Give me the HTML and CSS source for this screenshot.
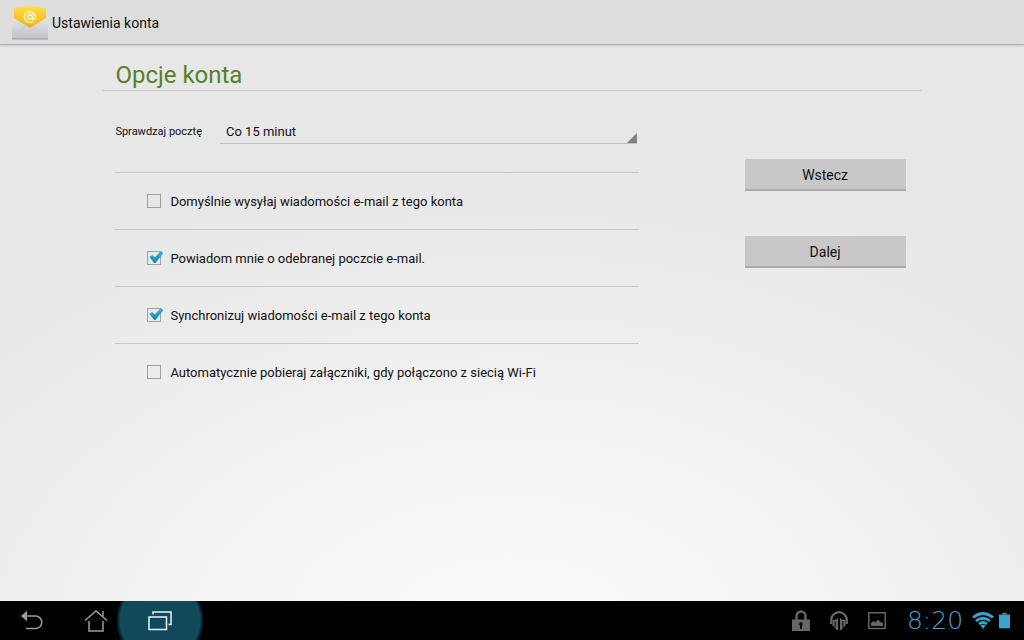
FILE: index.html
```html
<!DOCTYPE html>
<html lang="pl">
<head>
<meta charset="utf-8">
<title>Ustawienia konta</title>
<link rel="stylesheet" href="styles.css">
</head>
<body>
<header class="action-bar">
  <svg class="app-icon" viewBox="0 0 36 34" aria-hidden="true">
    <defs>
      <linearGradient id="paper" x1="0" y1="0" x2="0" y2="1"><stop offset="0" stop-color="#e6e6ea"/><stop offset="1" stop-color="#c0c0ca"/></linearGradient>
      <linearGradient id="flap" x1="0" y1="0" x2="0" y2="1"><stop offset="0" stop-color="#ffe04a"/><stop offset="1" stop-color="#f4ad0c"/></linearGradient>
    </defs>
    <path d="M0 12 3 3h30l3 9v20H0z" fill="url(#paper)"/>
    <path d="M2 2 18 0 34 2v11L18 23 2 13z" fill="url(#flap)"/>
    <path d="M0 11 18 22 36 11v22H0z" fill="url(#paper)"/>
    <path d="M1 32 14 20M35 32 22 20" stroke="#c8c8d2" fill="none"/>
    <path d="M0 33h36" stroke="#9999a4" fill="none"/>
    <circle cx="18" cy="11" r="2.300" fill="none" stroke="#fff8dc" stroke-width="1.400"/>
    <path d="M20.500 8.500v4q.3 1.300 1.600 1 1.600-.6 1.500-3a5.600 5.300 0 1 0-2.600 5.100" fill="none" stroke="#fff8dc" stroke-width="1.400"/>
  </svg>
  <h1 class="app-title">Ustawienia konta</h1>
</header>

<main class="content">
  <form class="sheet">
    <h2 class="heading">Opcje konta</h2>
    <div class="columns">
      <div class="options">
        <div class="frequency">
          <label class="frequency-label" for="freq">Sprawdzaj pocztę</label>
          <div class="spinner">
            <select class="spinner-select" id="freq"><option>Co 15 minut</option></select>
          </div>
        </div>
        <label class="option"><input class="check" type="checkbox"><span>Domyślnie wysyłaj wiadomości e-mail z tego konta</span></label>
        <label class="option"><input class="check" type="checkbox" checked><span>Powiadom mnie o odebranej poczcie e-mail.</span></label>
        <label class="option"><input class="check" type="checkbox" checked><span>Synchronizuj wiadomości e-mail z tego konta</span></label>
        <label class="option"><input class="check" type="checkbox"><span>Automatycznie pobieraj załączniki, gdy połączono z siecią Wi-Fi</span></label>
      </div>
      <div class="actions">
        <button class="button" type="button">Wstecz</button>
        <button class="button" type="button">Dalej</button>
      </div>
    </div>
  </form>
</main>

<nav class="system-bar">
  <button class="nav-button" type="button" aria-label="Wstecz">
    <svg width="24" height="22" viewBox="0 0 24 22"><path d="M5 6h10.500a6.300 6.300 0 0 1 0 12.600H6" fill="none" stroke="#9a9a9a" stroke-width="1.500"/><path d="M1 6 7 .8v10.400z" fill="#9a9a9a"/></svg>
  </button>
  <button class="nav-button" type="button" aria-label="Ekran główny">
    <svg width="24" height="22" viewBox="0 0 24 22" fill="none" stroke="#9a9a9a" stroke-width="1.500"><path d="M1 10.500 12 1l11 9.500M5 11v10h14V11M19 6.500V1"/></svg>
  </button>
  <button class="nav-button nav-button-active" type="button" aria-label="Ostatnie aplikacje">
    <svg width="24" height="20" viewBox="0 0 24 20" fill="none" stroke="#e4f6fb" stroke-width="1.500"><path d="M1 6h17.500v12.500H1z"/><path d="M5 3.500V1h18v12.500h-2.500"/></svg>
  </button>
  <div class="status">
    <div class="notifications">
      <svg width="18" height="22" viewBox="0 0 18 22" aria-hidden="true"><path d="M4.500 11V6a4.500 4.500 0 0 1 9 0v5" fill="none" stroke="#666" stroke-width="2.400"/><path d="M0 9.500h18V21H0z" fill="#666"/><path d="M9 12a2 2 0 0 1 1 3.600V19H8v-3.400A2 2 0 0 1 9 12" fill="#0a0a0a"/></svg>
      <svg width="18" height="20" viewBox="0 0 18 20" aria-hidden="true"><path d="M1.200 13V9a7.800 7.800 0 0 1 15.600 0v4" fill="none" stroke="#666" stroke-width="2.200"/><path d="M8 7v12H6.500Q5.500 16 2.500 14.500V9Q6 9.500 8 7m2 0v12h1.500q1-3 4-4.500V9Q12 9.500 10 7" fill="#666"/><path d="M5.200 10v6M12.800 10v6" stroke="#111"/></svg>
      <svg width="18" height="18" viewBox="0 0 18 18" aria-hidden="true"><path d="M.8.800h16.400v15.700H.8z" fill="none" stroke="#666" stroke-width="1.500"/><path d="M3 14v-3l2.500-2 2 1.500L10 7.500l2.500 2.500 2.500 1v3z" fill="#666"/></svg>
    </div>
    <time class="clock">8:20</time>
    <svg width="22" height="18" viewBox="0 0 22 18" fill="none" stroke="#37a6cf" aria-hidden="true"><path d="M1 5.500q10-8 20 0M4 9q7-5.500 14 0M7 12q4-3 8 0" stroke-width="2.800"/><path d="M8.500 13.500q2.500-1.600 5 0L11 17z" fill="#37a6cf" stroke="none"/></svg>
    <svg width="11" height="17" viewBox="0 0 12 17" aria-hidden="true"><path d="M3.500 0h5v2h-5z" fill="#777"/><path d="M0 2h12v15H0z" fill="#37a6cf"/></svg>
  </div>
</nav>
</body>
</html>
```
FILE: styles.css
```css
* {
  box-sizing: border-box;
}

body {
  margin: 0;
  min-height: 100vh;
  display: flex;
  flex-direction: column;
  font-family: Roboto, "Noto Sans", sans-serif;
  font-size: 13px;
  color: #111;
  background: radial-gradient(ellipse 75% 75% at 50% 100%, #fcfcfc, #e7e7e7);
}

.action-bar {
  display: flex;
  align-items: center;
  gap: 4px;
  height: 45px;
  padding: 1px 12px 0;
  background: #dddddd;
  border-bottom: 1px solid #b2b2b2;
  box-shadow: 0 1px 2px #c8c8c8;
}

.app-icon {
  width: 36px;
  height: 34px;
}

.app-title {
  margin: 0;
  font-size: 14px;
  font-weight: 400;
}

.content {
  flex: 1;
}

.sheet {
  width: 80%;
  margin: 0 auto;
}

.heading {
  margin: 0;
  padding: 14px 13px 0;
  height: 46px;
  border-bottom: 1px solid #c6c6c6;
  color: #587f2b;
  font-size: 24px;
  line-height: 32px;
  font-weight: 400;
}

.columns {
  display: grid;
  grid-template-columns: 66fr 34fr;
  padding: 0 13px;
}

.frequency {
  display: flex;
  align-items: center;
  gap: 18px;
  height: 81px;
}

.frequency-label {
  font-size: 11px;
}

.spinner {
  position: relative;
  flex: 1;
  margin-right: 2px;
  border-bottom: 1px solid #c2c2c2;
}

.spinner::after {
  content: "";
  position: absolute;
  right: 0;
  bottom: 0;
  width: 10px;
  height: 10px;
  background: #7f7f7f;
  clip-path: polygon(100% 0, 100% 100%, 0 100%);
  pointer-events: none;
}

.spinner-select {
  display: block;
  width: 100%;
  height: 24px;
  padding: 0 6px;
  appearance: none;
  border: 0;
  background: none;
  color: inherit;
  font: inherit;
}

.option {
  display: flex;
  align-items: center;
  gap: 9px;
  height: 57px;
  padding-left: 32px;
  border-top: 1px solid #cacaca;
}

.check {
  position: relative;
  width: 14px;
  height: 14px;
  margin: 0;
  appearance: none;
  border: 1px solid #a0a0a0;
}

.check:checked::after {
  content: "";
  position: absolute;
  left: 1px;
  top: -1px;
  width: 14px;
  height: 12px;
  background: linear-gradient(#35b5e0, #1487ae);
  clip-path: polygon(0 50%, 20% 34%, 38% 54%, 82% 0, 100% 16%, 44% 100%, 34% 100%);
}

.actions {
  display: flex;
  flex-direction: column;
  align-items: flex-end;
  gap: 45px;
  padding: 68px 3px 0;
}

.button {
  width: 161px;
  height: 32px;
  padding: 1px 0 0;
  border: 0;
  border-bottom: 2px solid #acacac;
  background: #c8c8c8;
  color: #111;
  font: 14px Roboto, "Noto Sans", sans-serif;
}

.system-bar {
  display: flex;
  height: 39px;
  overflow: hidden;
  background: #000;
}

.nav-button {
  display: flex;
  align-items: center;
  justify-content: center;
  width: 64px;
  padding: 0;
  border: 0;
  background: none;
}

.nav-button-active {
  width: 86px;
  margin-left: -11px;
  background: radial-gradient(circle at 50% 50%, #11495b 40px, #000 44px);
}

.status {
  display: flex;
  align-items: center;
  gap: 5px;
  margin-left: auto;
  padding-right: 14px;
}

.notifications {
  display: flex;
  align-items: center;
  gap: 20px;
  padding-right: 12px;
}

.clock {
  min-width: 64px;
  color: #37a6cf;
  font: 200 25px "DejaVu Sans", sans-serif;
  text-align: center;
}
```
